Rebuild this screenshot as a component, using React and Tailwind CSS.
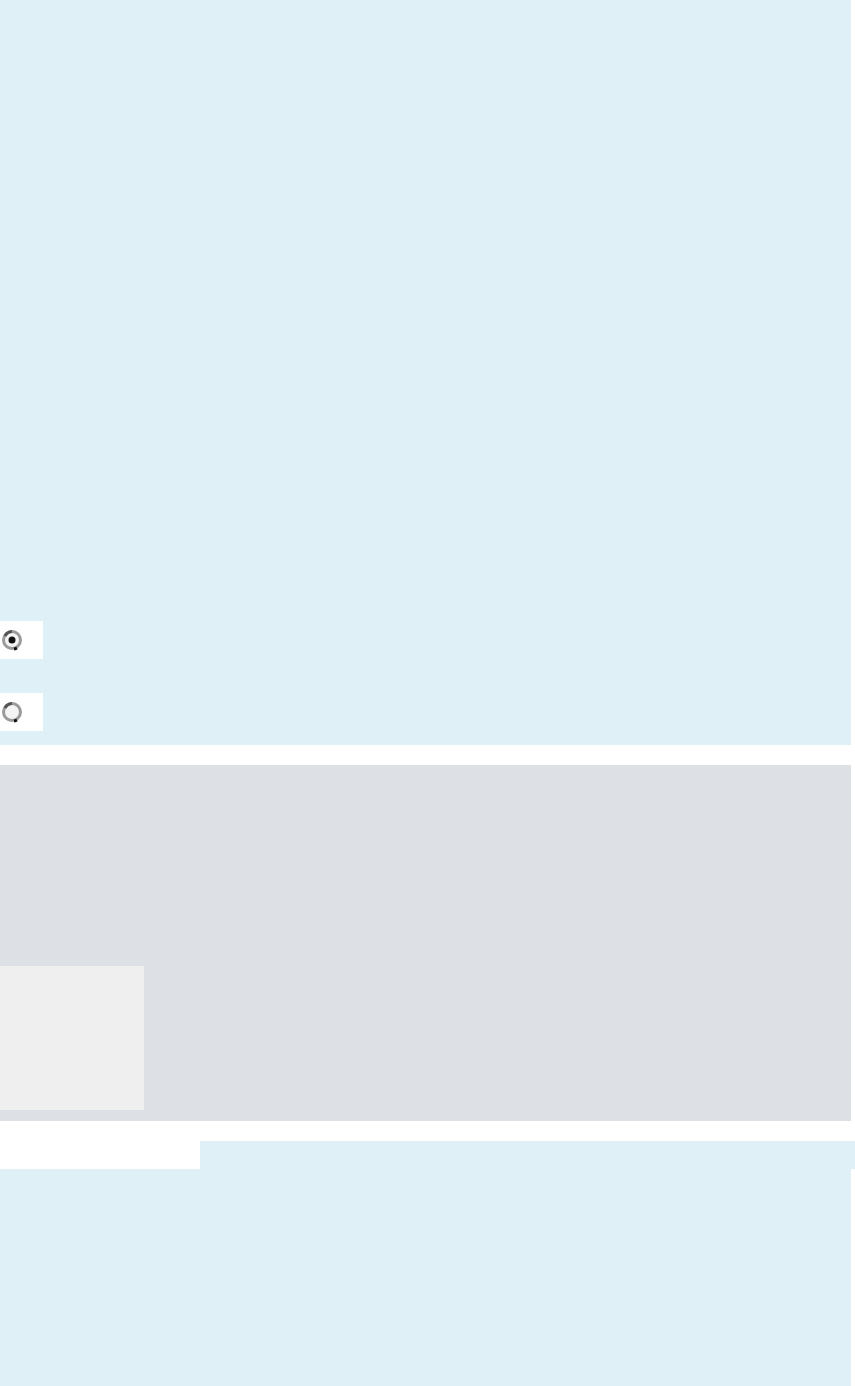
import React from "react";

// pixel-ish radio glyph, scaled up like the reference
const RadioGlyph = ({ checked }) => (
  <svg width="22" height="24" viewBox="0 0 22 24" className="block">
    <circle cx="11" cy="12" r="8.5" fill="#f4f4f4" stroke="#9a9a9a" strokeWidth="3" />
    <path d="M4 8 A8.5 8.5 0 0 1 11 3.5" fill="none" stroke="#555" strokeWidth="3" />
    <path d="M16 20 A8.5 8.5 0 0 1 13 21" fill="none" stroke="#111" strokeWidth="3" />
    {checked && <circle cx="11" cy="12" r="3.5" fill="#111" />}
  </svg>
);

const RadioRow = ({ checked }) => (
  <div className="flex h-[38px] w-[43px] items-center bg-white pl-[1px]">
    <RadioGlyph checked={checked} />
  </div>
);

export default function App() {
  return (
    <div className="min-h-[1386px] bg-white" style={{ fontFamily: '"Liberation Sans", sans-serif' }}>
      {/* top section */}
      <section className="flex h-[745px] w-[851px] flex-col justify-end gap-[34px] bg-[#dff1f7] pb-[14px]">
        <RadioRow checked />
        <RadioRow />
      </section>

      {/* gray panel */}
      <section className="mt-5 flex h-[356px] w-[851px] flex-col justify-end bg-[#dde1e6] pb-[11px]">
        <div className="h-[144px] w-[144px] bg-[#efefef]" />
      </section>

      {/* bottom */}
      <div className="mt-5 flex h-[28px] w-[855px] justify-end">
        <div className="h-full w-[655px] bg-[#dff1f7]" />
      </div>
      <section className="h-[217px] w-[851px] bg-[#dff1f7]" />
    </div>
  );
}
